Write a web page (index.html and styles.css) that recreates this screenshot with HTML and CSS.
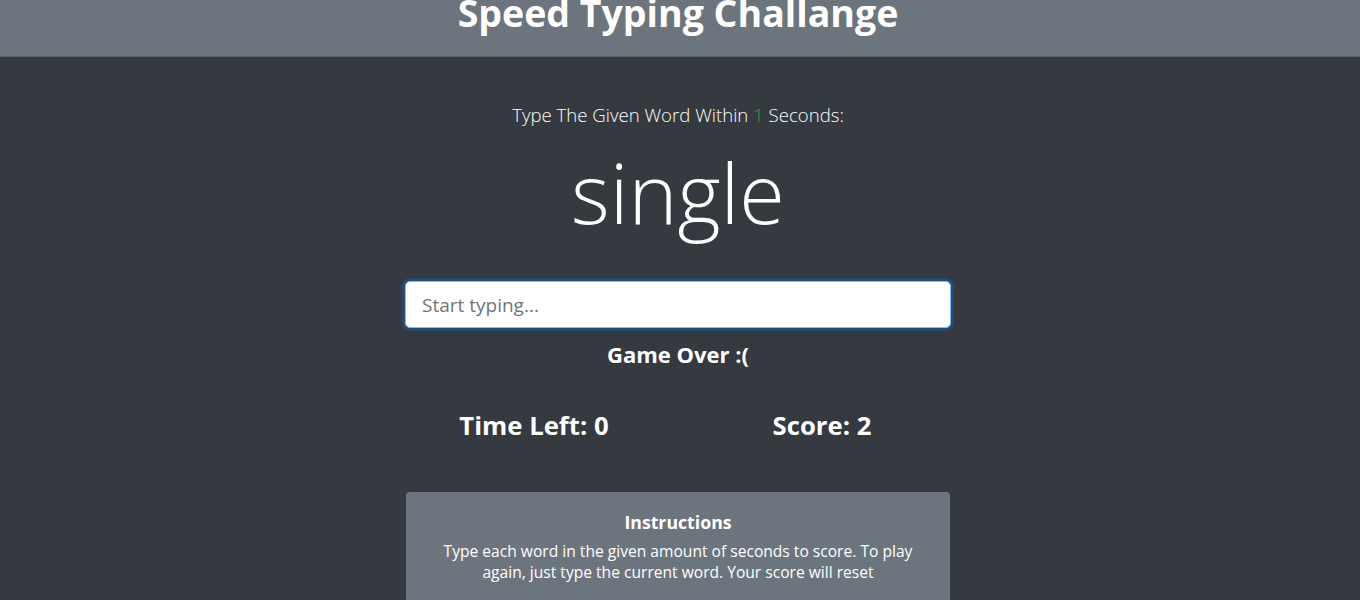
FILE: index.html
```html
<!DOCTYPE html>
<html lang="en">
<head>
<meta charset="utf-8">
<title>Speed Typing Challange</title>
<link rel="stylesheet" href="styles.css">
</head>
<body>
<header class="topbar">
  <h1 class="title">Speed Typing Challange</h1>
</header>
<div class="page">
  <main class="game">
    <p class="lead">Type The Given Word Within <span class="seconds">1</span> Seconds:</p>
    <h2 class="word">single</h2>
    <input class="word-input" type="text" placeholder="Start typing..." autofocus>
    <h4 class="message">Game Over :(</h4>
    <div class="stats">
      <h3 class="stat">Time Left: <span>0</span></h3>
      <h3 class="stat">Score: <span>2</span></h3>
    </div>
    <section class="card">
      <h5 class="card-title">Instructions</h5>
      <p class="card-text">Type each word in the given amount of seconds to score. To play again, just type the current word. Your score will reset</p>
    </section>
  </main>
</div>
</body>
</html>
```
FILE: styles.css
```css
* { box-sizing: border-box; }
html, body {
  margin: 0;
  padding: 0;
  height: 100%;
}
body {
  background: #343a40;
  color: #fff;
  font-family: "Open Sans", "Noto Sans", sans-serif;
  overflow: hidden;
}
.topbar {
  background: #6c757d;
  height: 57px;
  border-bottom: 1px solid #585f66;
  text-align: center;
  padding-right: 4px;
}
.title {
  margin: 0;
  font-size: 37.5px;
  font-weight: 700;
  line-height: 26px;
}
.page {
  padding-right: 4px;
}
.game {
  width: 546px;
  margin: 0 auto;
  display: flex;
  flex-direction: column;
  align-items: stretch;
  text-align: center;
}
.lead {
  margin: 43px 0 0;
  font-size: 18.6px;
  font-weight: 300;
  line-height: 30px;
}
.seconds { color: #28a745; }
.word {
  margin: 14px 0 0;
  font-size: 83px;
  font-weight: 300;
  line-height: 96px;
}
.word-input {
  margin-top: 41px;
  height: 47px;
  width: 100%;
  padding: 0 16px;
  font-family: inherit;
  font-size: 19px;
  color: #495057;
  background: #fff;
  border: 1px solid #80bdff;
  border-radius: 5px;
  box-shadow: 0 0 0 3px rgba(0, 123, 255, 0.25);
  outline: none;
}
.word-input::placeholder { color: #6c757d; opacity: 1; }
.message {
  margin: 11px 0 0;
  font-size: 22px;
  font-weight: 700;
  line-height: 30px;
}
.stats {
  margin-top: 39px;
  display: grid;
  grid-template-columns: 1fr 1fr;
  column-gap: 30px;
}
.stat {
  margin: 0;
  font-size: 25.7px;
  font-weight: 700;
  line-height: 36px;
}
.card {
  margin: 48px 1px 0;
  background: #6c757d;
  border-radius: 4px;
  padding: 17px 20px 20px;
}
.card-title {
  margin: 0;
  font-size: 17.7px;
  font-weight: 700;
  line-height: 27px;
}
.card-text {
  margin: 5px 0 0;
  font-size: 15.6px;
  line-height: 21px;
}
```
